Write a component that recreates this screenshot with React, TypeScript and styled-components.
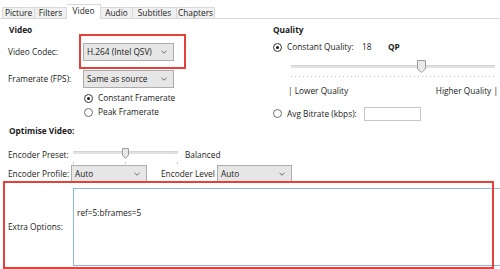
import React from "react";
import styled, { createGlobalStyle } from "styled-components";

const Global = createGlobalStyle`
  html, body { margin: 0; padding: 0; background: #fff; }
  body { width: 500px; height: 269px; overflow: hidden; }
  *, *::before, *::after { box-sizing: border-box; }
`;

const Page = styled.div`
  width: 500px;
  height: 269px;
  overflow: hidden;
  display: flex;
  flex-direction: column;
  font-family: "Open Sans", "Noto Sans", sans-serif;
  font-size: 8.3px;
  line-height: 12px;
  color: #1b1b1b;
  background: #fff;
`;

const TabStrip = styled.div`
  display: flex;
  align-items: flex-end;
  height: 19px;
  padding-left: 2px;
  border-bottom: 1px solid #d9d9d9;
  flex-shrink: 0;
`;

const Tab = styled.div<{ $active?: boolean; $w: number }>`
  width: ${(p) => p.$w}px;
  height: ${(p) => (p.$active ? 15 : 11)}px;
  margin-bottom: ${(p) => (p.$active ? -1 : 0)}px;
  padding-bottom: ${(p) => (p.$active ? 2 : 0)}px;
  border: 1px solid #d9d9d9;
  border-bottom: none;
  background: ${(p) => (p.$active ? "#ffffff" : "#f0f0f0")};
  display: flex;
  align-items: center;
  justify-content: center;
  white-space: nowrap;
  & + & {
    border-left: none;
  }
`;

const TopSection = styled.div`
  display: grid;
  grid-template-columns: 273px 1fr;
  padding-top: 5px;
`;

const Column = styled.div<{ $pad?: number }>`
  display: flex;
  flex-direction: column;
  padding-left: ${(p) => p.$pad ?? 0}px;
`;

const Heading = styled.div<{ $indent?: number; $mt?: number }>`
  font-weight: 700;
  height: 12px;
  line-height: 12px;
  padding-left: ${(p) => p.$indent ?? 0}px;
  margin-top: ${(p) => p.$mt ?? 0}px;
`;

const FieldRow = styled.div<{ $h: number; $mt: number }>`
  display: flex;
  align-items: center;
  height: ${(p) => p.$h}px;
  margin-top: ${(p) => p.$mt}px;
  white-space: nowrap;
`;

const FieldLabel = styled.span<{ $w: number; $ml?: number }>`
  width: ${(p) => p.$w}px;
  margin-left: ${(p) => p.$ml ?? 0}px;
  flex-shrink: 0;
`;

const Highlight = styled.div`
  position: relative;
  display: flex;
  &::after {
    content: "";
    position: absolute;
    top: -9px;
    left: -4px;
    right: -12px;
    bottom: -8px;
    border: 2px solid #e5403a;
    pointer-events: none;
  }
`;

const SelectBox = styled.div<{ $w: number; $h: number }>`
  width: ${(p) => p.$w}px;
  height: ${(p) => p.$h}px;
  border: 1px solid #adadad;
  background: #e6e6e6;
  display: flex;
  align-items: center;
  justify-content: space-between;
  padding: 0 6px 0 3px;
  flex-shrink: 0;
`;

const Chevron = () => (
  <svg width="6" height="4" viewBox="0 0 6 4">
    <polyline points="0.5,0.8 3,3.2 5.5,0.8" fill="none" stroke="#6a6a6a" strokeWidth="1" />
  </svg>
);

const Select = ({ value, w, h }: { value: string; w: number; h: number }) => (
  <SelectBox $w={w} $h={h}>
    <span>{value}</span>
    <Chevron />
  </SelectBox>
);

const RadioGroup = styled.div<{ $ml: number; $mt: number }>`
  display: flex;
  flex-direction: column;
  margin-left: ${(p) => p.$ml}px;
  margin-top: ${(p) => p.$mt}px;
`;

const RadioRow = styled.div<{ $h?: number; $mt?: number }>`
  display: flex;
  align-items: center;
  height: ${(p) => p.$h ?? 14}px;
  margin-top: ${(p) => p.$mt ?? 0}px;
  white-space: nowrap;
`;

const RadioCircle = styled.span<{ $checked?: boolean }>`
  width: 9px;
  height: 9px;
  border-radius: 50%;
  border: 1px solid ${(p) => (p.$checked ? "#333" : "#707070")};
  background: #fff;
  display: inline-flex;
  align-items: center;
  justify-content: center;
  flex-shrink: 0;
  margin-right: 5px;
  &::after {
    content: "";
    width: 3px;
    height: 3px;
    border-radius: 50%;
    background: #1a1a1a;
    display: ${(p) => (p.$checked ? "block" : "none")};
  }
`;

const Bold = styled.span`
  font-weight: 700;
`;

const Value = styled.span<{ $w: number }>`
  width: ${(p) => p.$w}px;
  flex-shrink: 0;
`;

const SliderWrap = styled.div<{ $w: number; $mt?: number; $ml?: number }>`
  width: ${(p) => p.$w}px;
  margin-top: ${(p) => p.$mt ?? 0}px;
  margin-left: ${(p) => p.$ml ?? 0}px;
  display: flex;
  flex-direction: column;
  flex-shrink: 0;
  align-self: flex-start;
`;

const TrackArea = styled.div<{ $h: number }>`
  position: relative;
  height: ${(p) => p.$h}px;
  display: flex;
  flex-direction: column;
`;

const Track = styled.div<{ $top: number }>`
  margin-top: ${(p) => p.$top}px;
  height: 3px;
  background: #e1e1e1;
  border-top: 1px solid #d4d4d4;
`;

const ThumbHolder = styled.div`
  position: absolute;
  top: 0;
  line-height: 0;
`;

const TickRow = styled.div<{ $mt: number }>`
  display: flex;
  justify-content: space-between;
  margin-top: ${(p) => p.$mt}px;
`;

const Tick = styled.span<{ $h: number }>`
  width: 1px;
  height: ${(p) => p.$h}px;
  background: #c2c2c2;
`;

const Thumb = ({ w, h }: { w: number; h: number }) => (
  <svg width={w} height={h} viewBox={`0 0 ${w} ${h}`}>
    <path
      d={`M0.5 0.5 H${w - 0.5} V${h - 4} L${w / 2} ${h - 0.5} L0.5 ${h - 4} Z`}
      fill="#e9e9e9"
      stroke="#9c9c9c"
      strokeWidth="1"
    />
  </svg>
);

type SliderProps = {
  w: number;
  value: number;
  max: number;
  thumbW: number;
  thumbH: number;
  trackTop: number;
  ticks: number;
  tickGap: number;
  tickH: number;
  mt?: number;
  ml?: number;
};

const Slider = ({ w, value, max, thumbW, thumbH, trackTop, ticks, tickGap, tickH, mt, ml }: SliderProps) => (
  <SliderWrap $w={w} $mt={mt} $ml={ml}>
    <TrackArea $h={thumbH}>
      <Track $top={trackTop} />
      <ThumbHolder style={{ left: Math.round((value / max) * (w - thumbW)) }}>
        <Thumb w={thumbW} h={thumbH} />
      </ThumbHolder>
    </TrackArea>
    <TickRow $mt={tickGap}>
      {Array.from({ length: ticks }).map((_, i) => (
        <Tick key={i} $h={tickH} />
      ))}
    </TickRow>
  </SliderWrap>
);

const RangeLabels = styled.div`
  display: flex;
  justify-content: space-between;
  height: 12px;
  margin-top: 8px;
  padding: 0 2px 0 15px;
  white-space: nowrap;
`;

const TextInput = styled.div<{ $w: number }>`
  width: ${(p) => p.$w}px;
  height: 14px;
  border: 1px solid #c6c6c6;
  background: #fff;
  flex-shrink: 0;
`;

const BottomSection = styled.div`
  display: flex;
  flex-direction: column;
  padding-left: 8px;
`;

const ExtraSection = styled.div`
  position: relative;
  display: flex;
  align-items: center;
  height: 87px;
  padding: 6px 0 3px 8px;
  &::after {
    content: "";
    position: absolute;
    top: -1px;
    left: 3px;
    right: 6px;
    bottom: 0;
    border: 2px solid #e5403a;
    pointer-events: none;
  }
`;

const ExtraBox = styled.div`
  width: 432px;
  height: 78px;
  flex-shrink: 0;
  border: 1px solid #8db7e6;
  background: #fff;
  padding: 18px 3px 0;
  white-space: pre;
`;

const tabs: [string, number][] = [
  ["Picture", 33],
  ["Filters", 32],
  ["Video", 34],
  ["Audio", 32],
  ["Subtitles", 44],
  ["Chapters", 38],
];

export default function App() {
  return (
    <>
      <Global />
      <Page>
        <TabStrip>
          {tabs.map(([t, w]) => (
            <Tab key={t} $w={w} $active={t === "Video"}>
              {t}
            </Tab>
          ))}
        </TabStrip>

        <TopSection>
          <Column $pad={8}>
            <Heading $indent={1}>Video</Heading>
            <FieldRow $h={18} $mt={7}>
              <FieldLabel $w={75}>Video Codec:</FieldLabel>
              <Highlight>
                <Select value="H.264 (Intel QSV)" w={91} h={18} />
              </Highlight>
            </FieldRow>
            <FieldRow $h={18} $mt={9}>
              <FieldLabel $w={75}>Framerate (FPS):</FieldLabel>
              <Select value="Same as source" w={91} h={18} />
            </FieldRow>
            <RadioGroup $ml={76} $mt={3}>
              <RadioRow>
                <RadioCircle $checked />
                Constant Framerate
              </RadioRow>
              <RadioRow>
                <RadioCircle />
                Peak Framerate
              </RadioRow>
            </RadioGroup>
          </Column>

          <Column>
            <Heading>Quality</Heading>
            <RadioRow $mt={4}>
              <RadioCircle $checked />
              <Value $w={75}>Constant Quality:</Value>
              <Value $w={26}>18</Value>
              <Bold>QP</Bold>
            </RadioRow>
            <Slider
              w={204}
              value={51 - 18}
              max={51}
              thumbW={9}
              thumbH={13}
              trackTop={5}
              ticks={52}
              tickGap={3}
              tickH={1}
              mt={6}
              ml={18}
            />
            <RangeLabels>
              <span>| Lower Quality</span>
              <span>Higher Quality |</span>
            </RangeLabels>
            <RadioRow $h={15} $mt={9}>
              <RadioCircle />
              <Value $w={77}>Avg Bitrate (kbps):</Value>
              <TextInput $w={57} />
            </RadioRow>
          </Column>
        </TopSection>

        <BottomSection>
          <Heading $indent={1} $mt={4}>
            Optimise Video:
          </Heading>
          <FieldRow $h={16} $mt={10}>
            <FieldLabel $w={65}>Encoder Preset:</FieldLabel>
            <Slider
              w={105}
              value={1}
              max={2}
              thumbW={7}
              thumbH={11}
              trackTop={3}
              ticks={3}
              tickGap={3}
              tickH={2}
              mt={1}
            />
            <FieldLabel $w={60} $ml={7}>
              Balanced
            </FieldLabel>
          </FieldRow>
          <FieldRow $h={17} $mt={2}>
            <FieldLabel $w={63}>Encoder Profile:</FieldLabel>
            <Select value="Auto" w={76} h={17} />
            <FieldLabel $w={56} $ml={14}>
              Encoder Level
            </FieldLabel>
            <Select value="Auto" w={75} h={17} />
          </FieldRow>
        </BottomSection>

        <ExtraSection>
          <FieldLabel $w={65}>Extra Options:</FieldLabel>
          <ExtraBox>ref=5:bframes=5</ExtraBox>
        </ExtraSection>
      </Page>
    </>
  );
}
